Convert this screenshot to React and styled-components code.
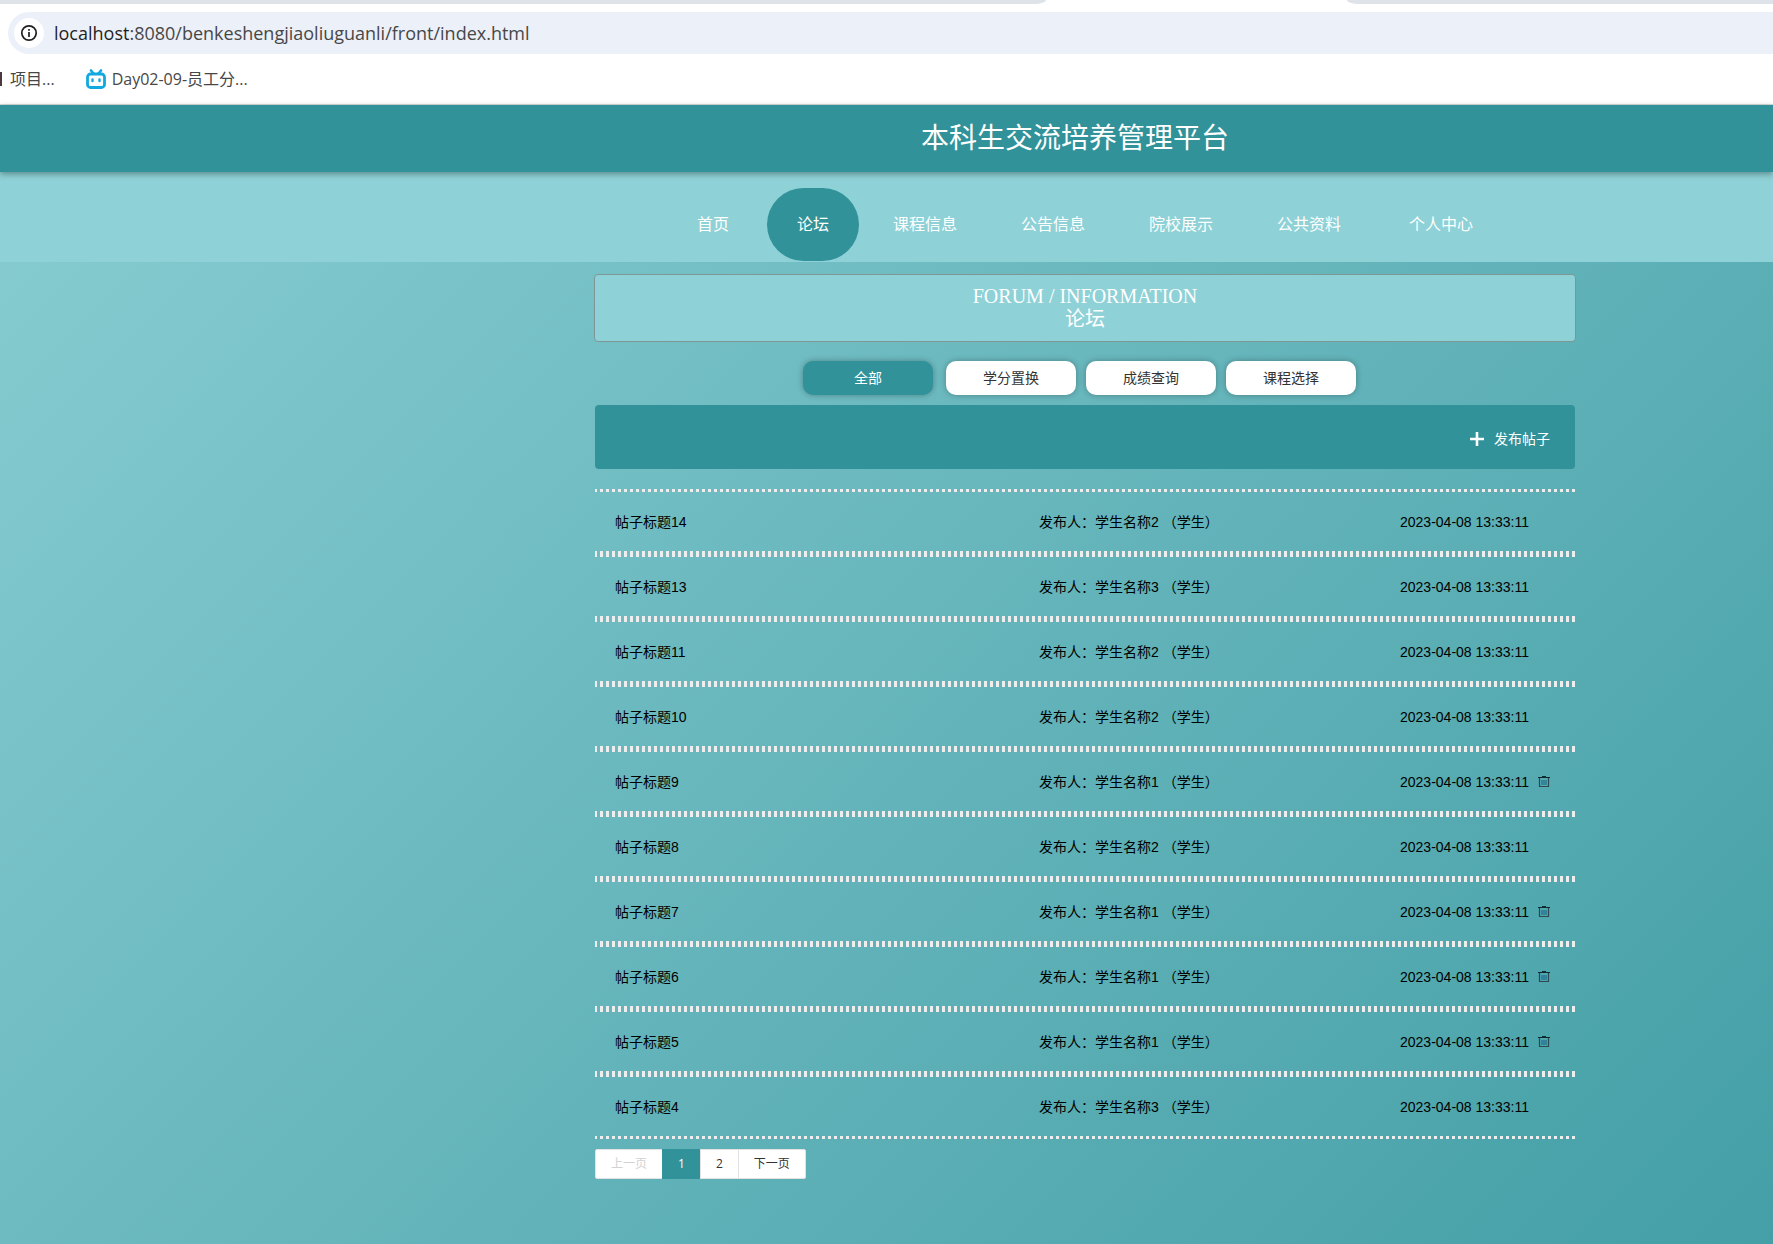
import React, { useState } from 'react'

import styled, { createGlobalStyle } from 'styled-components'

const navItems = ['首页', '论坛', '课程信息', '公告信息', '院校展示', '公共资料', '个人中心']

const categories = ['全部', '学分置换', '成绩查询', '课程选择']

const posts = [
  { id: 14, author: '学生名称2' },
  { id: 13, author: '学生名称3' },
  { id: 11, author: '学生名称2' },
  { id: 10, author: '学生名称2' },
  { id: 9, author: '学生名称1', own: true },
  { id: 8, author: '学生名称2' },
  { id: 7, author: '学生名称1', own: true },
  { id: 6, author: '学生名称1', own: true },
  { id: 5, author: '学生名称1', own: true },
  { id: 4, author: '学生名称3' },
]

function Browser() {
  return (
    <Chrome>
      <TabStrip>
        <TabsLeft />
        <TabsRight />
      </TabStrip>
      <AddressBar>
        <SiteInfo type="button" aria-label="site info">
          <svg width="18" height="18" viewBox="0 0 18 18" fill="none" stroke="#1f1f1f" strokeWidth="1.7">
            <circle cx="9" cy="9" r="7.2" />
            <path d="M9 8v5M9 5v1.700" />
          </svg>
        </SiteInfo>
        <Url><b>localhost</b>:8080/benkeshengjiaoliuguanli/front/index.html</Url>
      </AddressBar>
      <Bookmarks>
        <Favicon />
        <Bookmark href="#">项目...</Bookmark>
        <Bookmark href="#">
          <svg width="20" height="20" viewBox="0 0 20 20" fill="none" stroke="#12a8e0" strokeLinecap="round">
            <rect x="1.5" y="5" width="17" height="13.5" rx="3" strokeWidth="2.8" />
            <path d="M5 1.5l2.5 3M15 1.5l-2.5 3" strokeWidth="2.6" />
            <path d="M6.500 10.500v1.500M13.500 10.500v1.500" strokeWidth="2.4" />
          </svg>
          Day02-09-员工分...
        </Bookmark>
      </Bookmarks>
    </Chrome>
  )
}

function TrashIcon() {
  return (
    <svg width="12" height="12" viewBox="0 0 12 12" fill="none" stroke="#2a4a50">
      <path d="M0 1.500h12M4 .5h4" stroke="#0f2c33" />
      <path d="M1.500 2v8.500h9V2" strokeWidth="1.2" />
      <path d="M4 4v5M6 4v5M8 4v5" stroke="#165f8c" />
    </svg>
  )
}

export default function App() {
  const [category, setCategory] = useState('全部')

  return (
    <>
      <GlobalStyle />
      <Browser />
      <Page>
        <Header>
          <h1>本科生交流培养管理平台</h1>
        </Header>
        <Nav>
          {navItems.map((item) => (
            <NavLink key={item} href="#" $active={item === '论坛'}>{item}</NavLink>
          ))}
        </Nav>
        <Main>
          <Banner>
            <span>FORUM / INFORMATION</span>
            <span>论坛</span>
          </Banner>
          <Categories>
            {categories.map((item) => (
              <Category
                key={item}
                type="button"
                $active={item === category}
                onClick={() => setCategory(item)}
              >
                {item}
              </Category>
            ))}
          </Categories>
          <Toolbar>
            <Publish type="button">
              <svg width="14" height="14" viewBox="0 0 14 14" stroke="#fff" strokeWidth="2.6">
                <path d="M7 0v14M0 7h14" />
              </svg>
              发布帖子
            </Publish>
          </Toolbar>
          <Posts>
            {posts.map((post) => (
              <Post key={post.id}>
                <a href="#">帖子标题{post.id}</a>
                <span>发布人：{post.author} （学生）</span>
                <PostDate>
                  2023-04-08 13:33:11
                  {post.own && (
                    <Delete type="button" aria-label="删除">
                      <TrashIcon />
                    </Delete>
                  )}
                </PostDate>
              </Post>
            ))}
          </Posts>
          <Pager>
            <PageButton type="button" disabled>上一页</PageButton>
            <PageButton type="button" $active>1</PageButton>
            <PageButton type="button">2</PageButton>
            <PageButton type="button">下一页</PageButton>
          </Pager>
        </Main>
      </Page>
    </>
  )
}

const GlobalStyle = createGlobalStyle`
  *{
    box-sizing: border-box;
  }

  body{
    margin: 0;
    font-family: "Liberation Sans", "Noto Sans CJK SC", sans-serif;
    font-size: 14px;
    color: #000;
  }

  #root{
    min-height: 100vh;
    display: flex;
    flex-direction: column;
  }

  a{
    color: inherit;
    text-decoration: none;
  }

  button{
    font-family: inherit;
    cursor: pointer;
  }

  svg{
    display: block;
    flex: none;
  }
`;

const Chrome = styled.div`
  background: #fff;
  border-bottom: 1px solid #d9dcdd;
  font-family: "Open Sans", "Noto Sans CJK SC", sans-serif;
  color: #474747;
`;

const TabStrip = styled.div`
  display: flex;
  justify-content: space-between;
  height: 4px;
  margin-bottom: 8px;
`;

const TabsLeft = styled.div`
  width: 59%;
  background: #dee3ea;
  border-bottom-right-radius: 12px 4px;
`;

const TabsRight = styled.div`
  width: 24%;
  background: #dee3ea;
  border-bottom-left-radius: 12px 4px;
`;

const AddressBar = styled.div`
  display: flex;
  align-items: center;
  gap: 10px;
  height: 42px;
  margin-left: 8px;
  padding-left: 6px;
  background: #ecf0f9;
  border-radius: 21px 0 0 21px;
`;

const SiteInfo = styled.button`
  display: flex;
  align-items: center;
  justify-content: center;
  width: 30px;
  height: 30px;
  padding: 0;
  border: none;
  border-radius: 50%;
  background: #fff;
`;

const Url = styled.span`
  font-size: 18px;

  b{
    font-weight: normal;
    color: #1f1f1f;
  }
`;

const Bookmarks = styled.div`
  display: flex;
  align-items: center;
  height: 50px;
`;

const Favicon = styled.span`
  width: 2px;
  height: 14px;
  background: #4a3a40;
`;

const Bookmark = styled.a`
  display: flex;
  align-items: center;
  gap: 6px;
  margin-left: 8px;
  font-size: 16px;
  line-height: 20px;

  & + &{
    margin-left: 31px;
  }
`;

const Page = styled.div`
  flex: 1;
  background: linear-gradient(135deg, #88cdd2, #449fa6);
`;

const Header = styled.header`
  position: relative;
  padding: 0 20px 0 397px;
  background: #319299;
  box-shadow: 0 2px 6px rgba(0, 0, 0, .35);
  text-align: center;

  h1{
    margin: 0;
    font-size: 28px;
    line-height: 67px;
    font-weight: normal;
    color: #fff;
  }
`;

const Nav = styled.nav`
  display: flex;
  justify-content: center;
  gap: 4px;
  padding: 16px 0 1px 397px;
  background: #8ed1d6;
`;

const NavLink = styled.a`
  padding: 0 30px;
  border-radius: 40px;
  background: ${({ $active }) => ($active ? '#319299' : 'transparent')};
  color: #fff;
  font-size: 16px;
  line-height: 73px;

  &:first-child{
    margin-right: 4px;
  }

  &:last-child{
    margin-left: 4px;
  }
`;

const Main = styled.main`
  display: flex;
  flex-direction: column;
  align-items: center;
  padding: 12px 0 60px 397px;
`;

const Banner = styled.h2`
  display: flex;
  flex-direction: column;
  width: 100%;
  max-width: 982px;
  margin: 0;
  padding: 10px;
  border: 1px solid #7d9894;
  border-radius: 4px;
  background: #8ed1d6;
  color: #fff;
  font-family: "Liberation Serif", "Noto Sans CJK SC", serif;
  font-size: 20px;
  font-weight: normal;
  line-height: 23px;
  text-align: center;
`;

const Categories = styled.div`
  display: flex;
  gap: 10px;
  margin: 19px 0 10px;
  padding-right: 11px;
`;

const Category = styled.button`
  width: 130px;
  height: 34px;
  padding: 0 0 2px;
  border: none;
  border-radius: 10px;
  background: ${({ $active }) => ($active ? '#319299' : '#fff')};
  color: ${({ $active }) => ($active ? '#fff' : '#333')};
  box-shadow: 0 0 6px rgba(0, 0, 0, .3);
  font-size: 14px;

  &:first-child{
    margin-right: 3px;
  }
`;

const Toolbar = styled.div`
  display: flex;
  justify-content: flex-end;
  width: 100%;
  max-width: 980px;
  padding: 4px 25px 0;
  border-radius: 4px;
  background: #319299;
`;

const Publish = styled.button`
  display: flex;
  align-items: center;
  gap: 10px;
  height: 60px;
  padding: 0;
  border: none;
  background: none;
  color: #fff;
  font-size: 14px;
  line-height: 18px;
`;

const Posts = styled.ul`
  width: 100%;
  max-width: 980px;
  margin: 20px 0 10px;
  padding: 0;
  list-style: none;
  line-height: 24px;
`;

/* square dots, 3px on and 3px off, along the top and bottom edges */
const Post = styled.li`
  --dots: repeating-linear-gradient(to left, #eee 0 3px, transparent 3px 6px);
  display: grid;
  grid-template-columns: 424fr 361fr 155fr;
  align-items: center;
  height: 65px;
  padding: 0 20px;
  background: var(--dots) top / 100% 3px no-repeat, var(--dots) bottom / 100% 3px no-repeat;
`;

const PostDate = styled.span`
  display: flex;
  align-items: center;
  gap: 9px;
`;

const Delete = styled.button`
  padding: 0;
  border: none;
  background: none;
`;

const Pager = styled.div`
  display: flex;
  width: 100%;
  max-width: 980px;
`;

const PageButton = styled.button`
  height: 30px;
  padding: 0 15px 2px;
  border: 1px solid ${({ $active }) => ($active ? '#319299' : '#e2e2e2')};
  background: ${({ $active }) => ($active ? '#319299' : '#fff')};
  color: ${({ $active }) => ($active ? '#fff' : '#333')};
  font-family: "Open Sans", "Noto Sans CJK SC", sans-serif;
  font-size: 12px;

  & + &{
    margin-left: -1px;
  }

  &:first-child{
    border-radius: 2px 0 0 2px;
  }

  &:last-child{
    border-radius: 0 2px 2px 0;
  }

  &:disabled{
    color: #d2d2d2;
    cursor: not-allowed;
  }
`;
